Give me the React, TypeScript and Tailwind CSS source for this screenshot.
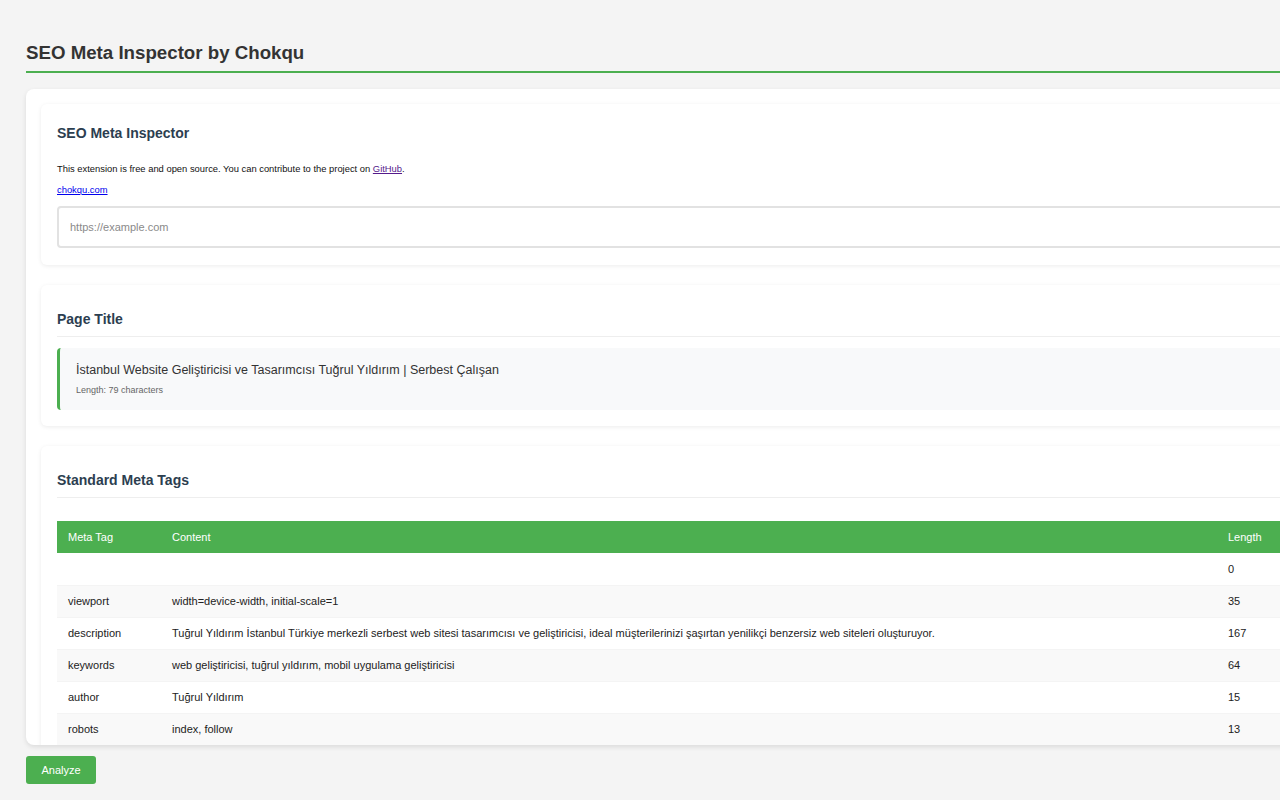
const metaRows = [
  { name: '', content: '', length: 0 },
  { name: 'viewport', content: 'width=device-width, initial-scale=1', length: 35 },
  {
    name: 'description',
    content:
      'Tuğrul Yıldırım İstanbul Türkiye merkezli serbest web sitesi tasarımcısı ve geliştiricisi, ideal müşterilerinizi şaşırtan yenilikçi benzersiz web siteleri oluşturuyor.',
    length: 167,
  },
  { name: 'keywords', content: 'web geliştiricisi, tuğrul yıldırım, mobil uygulama geliştiricisi', length: 64 },
  { name: 'author', content: 'Tuğrul Yıldırım', length: 15 },
  { name: 'robots', content: 'index, follow', length: 13 },
];

function SectionTitle({ children }: { children: React.ReactNode }) {
  return (
    <h3 className="text-[14px] leading-[18px] font-bold text-[#2c3e50] pb-[8px] border-b border-[#eeeeee]">
      {children}
    </h3>
  );
}

export default function App() {
  return (
    <div className="h-screen w-full overflow-hidden bg-[#f4f4f4] font-['Liberation_Sans',Arial,sans-serif]">
      <div className="w-[1352px] pl-[26px] pt-[41px]">
        <h1 className="text-[18.7px] leading-[24px] font-bold text-[#333333] pb-[6px] border-b-2 border-[#4caf50]">
          SEO Meta Inspector by Chokqu
        </h1>

        <div className="mt-[16px] h-[656px] overflow-hidden bg-white rounded-lg shadow-[0_2px_5px_rgba(0,0,0,0.1)] p-[15px] flex flex-col gap-[20px]">
          {/* intro card */}
          <div className="bg-white rounded-md shadow-[0_1px_4px_rgba(0,0,0,0.08)] px-[16px] pt-[20px] pb-[17px]">
            <h2 className="text-[14px] leading-[18px] font-bold text-[#2c3e50]">SEO Meta Inspector</h2>
            <p className="mt-[21px] text-[9.4px] leading-[12px] text-[#111111]">
              This extension is free and open source. You can contribute to the project on{' '}
              <a href="#" className="text-[#551a8b] underline">GitHub</a>.
            </p>
            <p className="mt-[9px] text-[9.4px] leading-[12px]">
              <a href="#" className="text-[#0000ee] underline">chokqu.com</a>
            </p>
            <input
              type="text"
              placeholder="https://example.com"
              className="mt-[10px] w-full h-[42px] rounded-[4px] border-2 border-[#e2e2e2] px-[11px] text-[11px] text-[#333] placeholder:text-[#8a8a8a] outline-none"
            />
          </div>

          {/* page title card */}
          <div className="bg-white rounded-md shadow-[0_1px_4px_rgba(0,0,0,0.08)] px-[16px] pt-[25px] pb-[16px]">
            <SectionTitle>Page Title</SectionTitle>
            <div className="mt-[11px] bg-[#f8f9fa] border-l-[3px] border-[#4caf50] rounded-[4px] pl-[16px] pt-[15px] pb-[14px]">
              <div className="text-[12.5px] leading-[15px] text-[#333333]">
                İstanbul Website Geliştiricisi ve Tasarımcısı Tuğrul Yıldırım | Serbest Çalışan
              </div>
              <div className="mt-[6px] text-[9px] leading-[12px] text-[#666666]">Length: 79 characters</div>
            </div>
          </div>

          {/* meta tags card */}
          <div className="bg-white rounded-md shadow-[0_1px_4px_rgba(0,0,0,0.08)] px-[16px] pt-[25px] pb-[16px]">
            <SectionTitle>Standard Meta Tags</SectionTitle>
            <table className="mt-[23px] w-full table-fixed border-collapse text-[11px]">
              <colgroup>
                <col className="w-[104px]" />
                <col />
                <col className="w-[104px]" />
              </colgroup>
              <thead>
                <tr className="h-[32px] bg-[#4caf50] text-white">
                  <th className="px-[11px] text-left font-normal">Meta Tag</th>
                  <th className="px-[11px] text-left font-normal">Content</th>
                  <th className="px-[11px] text-left font-normal">Length</th>
                </tr>
              </thead>
              <tbody>
                {metaRows.map((row, i) => (
                  <tr
                    key={i}
                    className={`h-[32px] border-b border-[#f4f4f4] text-[#222222] ${i % 2 === 1 ? 'bg-[#f9f9f9]' : 'bg-white'}`}
                  >
                    <td className="px-[11px]">{row.name}</td>
                    <td className="px-[11px]">{row.content}</td>
                    <td className="px-[11px]">{row.length}</td>
                  </tr>
                ))}
              </tbody>
            </table>
          </div>
        </div>

        <button className="mt-[11px] h-[28px] w-[70px] rounded-[3px] bg-[#4caf50] text-white text-[11px]">
          Analyze
        </button>
      </div>
    </div>
  );
}
